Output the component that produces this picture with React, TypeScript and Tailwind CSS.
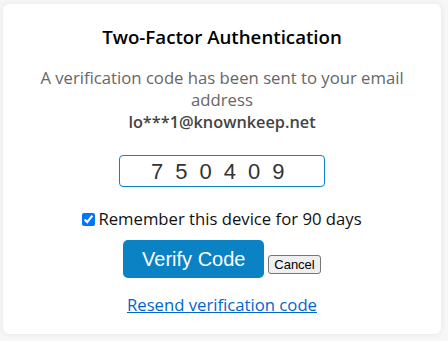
import { useState } from "react";

export default function App() {
  const [remember, setRemember] = useState(true);
  const [code, setCode] = useState("750409");

  return (
    <div className="min-h-[341px] w-[448px] bg-[#f7f7f7] pl-[3px] pt-[4px] font-['Open_Sans',sans-serif]">
      <div className="flex h-[330px] w-[438px] flex-col items-center rounded-[6px] bg-white pt-[20px] shadow-[0_0_6px_rgba(0,0,0,0.08)]">
        <h2 className="text-[18.7px] font-semibold leading-[26px] text-black">Two-Factor Authentication</h2>

        <p className="mt-[17px] w-[390px] text-center text-[16.7px] leading-[22px] text-[#666]">
          A verification code has been sent to your email address
        </p>
        <p className="text-[16.3px] font-semibold leading-[22px] text-[#444]">lo***1@knownkeep.net</p>

        <input
          value={code}
          onChange={(e) => setCode(e.target.value)}
          className="mt-[22px] h-[32px] w-[206px] rounded-[4px] border border-[#0a84c8] pl-[31px] text-left font-['Liberation_Sans',Arial,sans-serif] text-[22px] tracking-[12px] text-[#333] outline-none"
        />

        <label className="mt-[21px] flex items-center gap-[3px] text-[16.7px] leading-[22px] text-[#111]">
          <input
            type="checkbox"
            checked={remember}
            onChange={(e) => setRemember(e.target.checked)}
            className="h-[13px] w-[13px] accent-[#0075ff]"
          />
          Remember this device for 90 days
        </label>

        <div className="mt-[10px] flex items-center gap-[4px]">
          <button className="h-[38px] w-[141px] rounded-[5px] bg-[#0a82c4] font-['Liberation_Sans',Arial,sans-serif] text-[20px] text-white">
            Verify Code
          </button>
          <button className="mt-[10px] h-[19px] rounded-[3px] border border-[#767676] bg-[#efefef] px-[5px] font-['Liberation_Sans',Arial,sans-serif] text-[13px] leading-[17px] text-black">
            Cancel
          </button>
        </div>

        <a href="#" className="mt-[16px] text-[16.7px] leading-[22px] text-[#0066cc] underline">
          Resend verification code
        </a>
      </div>
    </div>
  );
}
